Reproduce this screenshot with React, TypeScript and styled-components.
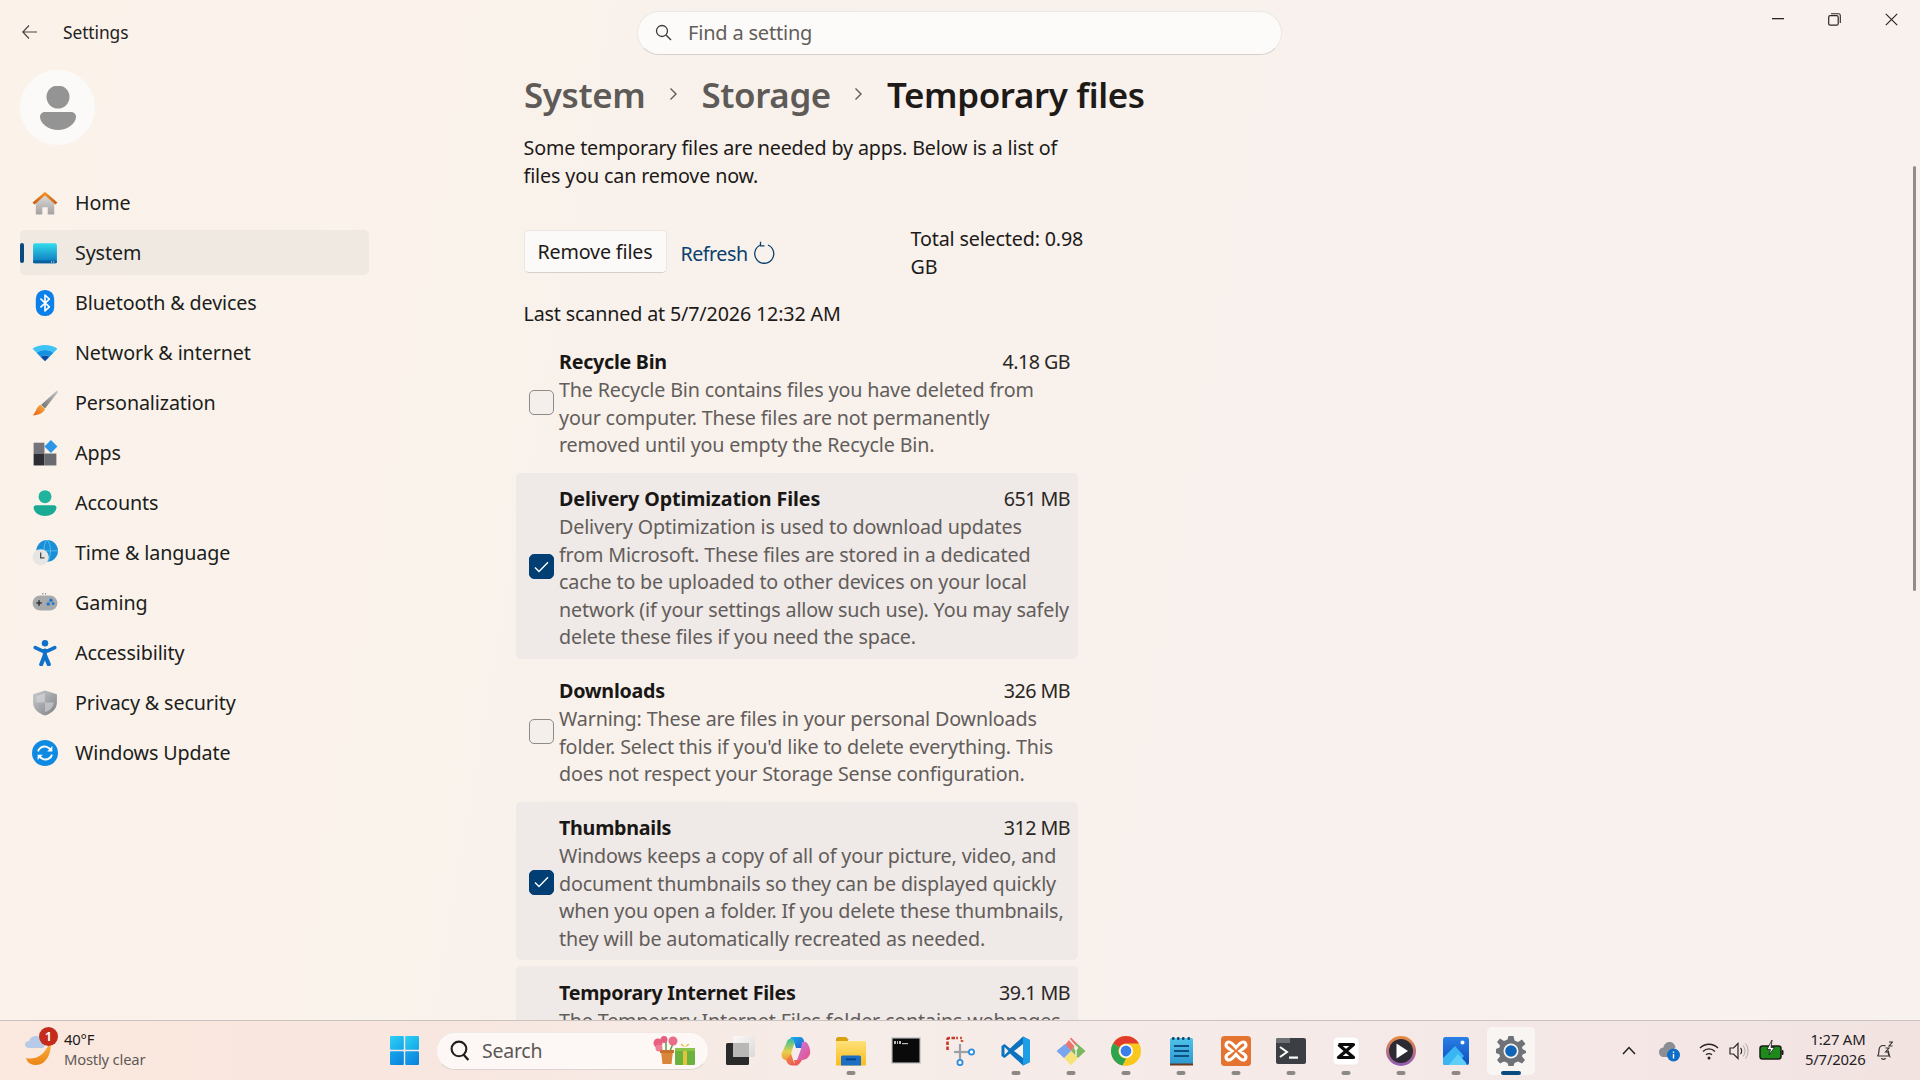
import React from "react";
import styled, { createGlobalStyle } from "styled-components";

const Global = createGlobalStyle`
  html, body { margin: 0; padding: 0; height: 100%; overflow: hidden; }
  body { font-family: "Noto Sans", "Open Sans", "Liberation Sans", sans-serif; color: #1d1a18; }
  * { box-sizing: border-box; }
`;

const Shell = styled.div`
  width: 1920px; height: 1080px; display: flex; flex-direction: column;
  background: linear-gradient(100deg, #fbf3ea 0%, #f8f1ec 45%, #f9f1ee 100%);
`;
const TitleBar = styled.header`
  flex: none; height: 65px; display: grid; grid-template-columns: 637px 645px 1fr; align-items: center;
`;
const BackCluster = styled.div`
  display: flex; align-items: center; gap: 26px; padding: 0 0 2px 22px;
  font-size: 17.4px; letter-spacing: -0.1px; color: #24211f;
`;
const SearchBox = styled.div`
  height: 44px; border-radius: 22px; background: #fdfbf9; border: 1px solid #ece7e2; border-bottom-color: #d5d0cb;
  display: flex; align-items: center; gap: 16px; padding-left: 17px;
  font-size: 20px; color: #625e5b; letter-spacing: -0.2px;
`;
const WindowControls = styled.div`
  justify-self: end; align-self: start; display: flex;
`;
const ControlButton = styled.div`
  width: 57px; height: 38px; display: flex; align-items: center; justify-content: center;
`;
const Body = styled.div`
  flex: 1; min-height: 0; display: flex; overflow: hidden; position: relative;
`;
const Sidebar = styled.aside`
  flex: none; width: 516px; padding-left: 20px; padding-top: 5px;
`;
const Avatar = styled.div`
  width: 75px; height: 75px; border-radius: 50%; background: #fbfaf9;
  display: flex; align-items: center; justify-content: center; margin-bottom: 35px;
`;
const Nav = styled.nav`
  display: flex; flex-direction: column; gap: 5px; width: 349px;
`;
const NavItem = styled.div<{ $active?: boolean }>`
  position: relative; flex: none; height: 45px; border-radius: 5px; display: flex; align-items: center; gap: 17px; padding-left: 12px;
  font-size: 19.7px; letter-spacing: -0.12px; color: #201d1b;
  background: ${(p) => (p.$active ? "#efe9e2" : "transparent")};
`;
const NavAccent = styled.span`
  position: absolute; left: 0; top: 13px; width: 4px; height: 20px; border-radius: 2px; background: #0a4a80;
`;
const NavIcon = styled.svg`
  width: 26px; height: 26px; flex: none;
`;
const Main = styled.main`
  flex: none; width: 562px; display: flex; flex-direction: column;
  & > * { flex: none; }
`;
const Breadcrumb = styled.h1`
  margin: 4px 0 0 8px; height: 50px; width: max-content; display: flex; align-items: center; gap: 23.5px;
  font-size: 34.9px; font-weight: 600; letter-spacing: -0.36px; white-space: nowrap;
`;
const Crumb = styled.span<{ $current?: boolean }>`
  color: ${(p) => (p.$current ? "#1d1a18" : "#5e5a57")};
`;
const CrumbChevron = styled.svg`
  flex: none; width: 9px; height: 14px;
`;
const Intro = styled.p`
  margin: 15px 0 0 7.5px; font-size: 19.7px; line-height: 27.5px; letter-spacing: -0.14px; white-space: nowrap; color: #1d1a18;
`;
const ActionRow = styled.div`
  margin: 36px 0 0 7.5px; display: flex; align-items: center; height: 55px;
`;
const RemoveButton = styled.div`
  flex: none; width: 143px; height: 43px; margin-bottom: 3px; border-radius: 5px; background: #fcfaf8;
  border: 1px solid #ebe6e2; border-bottom-color: #d3cfca; display: flex; align-items: center; justify-content: center;
  font-size: 19.7px; letter-spacing: -0.16px;
`;
const RefreshLink = styled.div`
  margin: 1px 0 0 14px; flex: none; display: flex; align-items: center; gap: 5px; color: #0a406f;
  font-size: 19.7px; letter-spacing: -0.5px;
`;
const TotalSelected = styled.div`
  margin-left: 136px; flex: none; font-size: 19.7px; line-height: 27.5px; letter-spacing: -0.16px; white-space: nowrap;
`;
const LastScanned = styled.div`
  margin: 20px 0 8px 7.5px; font-size: 19.7px; line-height: 27.5px; letter-spacing: -0.15px; white-space: nowrap;
`;
const FileList = styled.div`
  display: flex; flex-direction: column; gap: 6px;
`;
const FileRow = styled.div<{ $selected?: boolean }>`
  flex: none; display: flex; align-items: center; gap: 5px; padding: 12.5px 8px 8px 13px; border-radius: 5px;
  background: ${(p) => (p.$selected ? "#efe9e7" : "transparent")};
`;
const Check = styled.div<{ $checked?: boolean }>`
  flex: none; width: 25px; height: 25px; border-radius: 5px; display: flex; align-items: center; justify-content: center;
  margin-top: -2px;
  background: ${(p) => (p.$checked ? "#003e73" : "#f5efeb")};
  border: 1px solid ${(p) => (p.$checked ? "#003e73" : "#8f8b88")};
`;
const FileBody = styled.div`
  flex: 1; min-width: 0;
`;
const FileHead = styled.div`
  display: flex; justify-content: space-between; font-size: 19.7px; line-height: 27.5px; margin-bottom: 0.5px;
`;
const FileName = styled.span<{ $wide?: boolean }>`
  font-weight: 700; letter-spacing: ${(p) => (p.$wide ? "-0.1px" : "-0.27px")}; color: #191715;
`;
const FileSize = styled.span`
  color: #2a2725; letter-spacing: -0.55px;
`;
const FileDesc = styled.div`
  font-size: 19.7px; line-height: 27.5px; letter-spacing: -0.15px; color: #625d5a; white-space: nowrap;
`;
const ScrollThumb = styled.div`
  position: absolute; right: 4px; top: 101px; width: 3px; height: 425px; border-radius: 2px; background: #908d8b;
`;

const Taskbar = styled.footer`
  flex: none; height: 60px; border-top: 1px solid #cbc3bf; display: flex; align-items: center; padding-left: 25px;
  background: linear-gradient(90deg, #fbe9df 0%, #f8e6df 20%, #f6ece8 45%, #f5eae8 70%, #f2e3e1 100%);
`;
const Weather = styled.div`
  position: relative; flex: none; width: 365px; display: flex; align-items: center; gap: 11px;
`;
const WeatherGlyph = styled.svg`
  flex: none; width: 28px; height: 34px; margin-bottom: 6px;
`;
const WeatherBadge = styled.span`
  position: absolute; left: 14px; top: -2px; width: 19px; height: 19px; border-radius: 50%; background: #c42b1c; color: #fff;
  display: flex; align-items: center; justify-content: center; font-size: 13px; font-weight: 600;
`;
const WeatherText = styled.div`
  display: flex; flex-direction: column; line-height: 20px; font-size: 14.8px; letter-spacing: -0.2px; margin-bottom: 4px;
`;
const WeatherTemp = styled.span`
  color: #1d1a18;
`;
const WeatherNote = styled.span`
  color: #5f5a57;
`;
const TaskSearch = styled.div`
  flex: none; margin-left: 17px; width: 273px; height: 38px; border-radius: 19px; background: #fdf8f5;
  border: 1px solid #f0e8e3; border-bottom-color: #dcd3ce; display: flex; align-items: center; padding: 0 12px 0 13px;
  font-size: 19.5px; color: #5b5754; letter-spacing: -0.25px;
`;
const TaskSearchLabel = styled.span`
  margin-left: 12px; flex: 1;
`;
const AppStrip = styled.div`
  margin-left: 4.5px; display: flex;
`;
const AppCell = styled.div`
  width: 55px; height: 59px; display: flex; align-items: center; justify-content: center;
`;
const AppTile = styled.div<{ $active?: boolean }>`
  position: relative; width: 48px; height: 48px; border-radius: 5px; display: flex; align-items: center; justify-content: center;
  background: ${(p) => (p.$active ? "#f9f5f3" : "transparent")};
`;
const Pip = styled.span<{ $active?: boolean }>`
  position: absolute; bottom: 0; left: 50%; transform: translateX(-50%); height: 4px; border-radius: 2px;
  width: ${(p) => (p.$active ? "20px" : "9px")};
  background: ${(p) => (p.$active ? "#0a4a80" : "#8c8886")};
`;
const Tray = styled.div`
  margin-left: 83.5px; display: flex; align-items: center;
`;
const TrayItem = styled.div<{ $gap: number }>`
  margin-left: ${(p) => p.$gap}px; display: flex; align-items: center;
`;
const Clock = styled.div`
  display: flex; flex-direction: column; align-items: flex-end; width: 59px; line-height: 20px; font-size: 14.9px; letter-spacing: -0.2px; color: #24211f; white-space: nowrap; margin-bottom: 4px;
`;

const I = ({ children }: { children: React.ReactNode }) => (
  <NavIcon viewBox="0 0 24 24">{children}</NavIcon>
);

const navItems: { label: string; icon: React.ReactNode; active?: boolean }[] = [
  { label: "Home", icon: (<I>
    <defs>
      <linearGradient id="hb" x1="0" y1="0" x2="0" y2="1"><stop offset="0" stopColor="#dcdad8" /><stop offset="1" stopColor="#a3a2a1" /></linearGradient>
      <linearGradient id="hr" x1="0" y1="0" x2="0" y2="1"><stop offset="0" stopColor="#f79c30" /><stop offset="1" stopColor="#c4560f" /></linearGradient>
    </defs>
    <path d="M3.500 12 12 5l8.500 7v10.500h-6V16h-5v6.500h-6Z" fill="url(#hb)" />
    <path d="M.5 11.500 12 1.500l11.500 10-1.800 1.900L12 5 2.300 13.400Z" fill="url(#hr)" />
  </I>) },
  { label: "System", active: true, icon: (<I>
    <defs><linearGradient id="sy" x1="0" y1="0" x2="0" y2="1"><stop offset="0" stopColor="#34dcec" /><stop offset="1" stopColor="#0b74bd" /></linearGradient></defs>
    <rect x="1" y="3" width="22" height="18.500" rx="1.800" fill="url(#sy)" />
    <rect x="1" y="19" width="22" height="2.500" rx="1" fill="#0a5f9c" />
    <rect x="17.500" y="19.700" width="1" height="1" fill="#cfeefa" /><rect x="19.500" y="19.700" width="1" height="1" fill="#cfeefa" />
  </I>) },
  { label: "Bluetooth & devices", icon: (<I>
    <rect x="3.500" y="0" width="17" height="24" rx="8" fill="#0b7fea" />
    <path d="M7.800 8 16 15.600 12 19.400V4.600L16 8.400 7.800 16" fill="none" stroke="#fff" strokeWidth="1.500" strokeLinejoin="round" />
  </I>) },
  { label: "Network & internet", icon: (<I>
    <path d="M.5 8C6.500 3.500 17.500 3.500 23.500 8L19.800 11.800C15 8.500 9 8.500 4.200 11.800Z" fill="#3dc3f5" />
    <path d="M4.200 11.800C9 8.500 15 8.500 19.800 11.800L16 15.600C13.500 14 10.500 14 8 15.600Z" fill="#1492e2" />
    <path d="M8 15.600C10.500 14 13.500 14 16 15.600L12 19.500Z" fill="#0a4ca3" />
  </I>) },
  { label: "Personalization", icon: (<I>
    <defs>
      <linearGradient id="bh" x1="1" y1="0" x2="0" y2="1"><stop offset="0" stopColor="#c9c9c9" /><stop offset="1" stopColor="#6f6f6f" /></linearGradient>
      <linearGradient id="bt" x1="1" y1="0" x2="0" y2="1"><stop offset="0" stopColor="#f7b34a" /><stop offset="1" stopColor="#e4610d" /></linearGradient>
    </defs>
    <path d="M23 .5 24 2 12 17 8.500 13.500Z" fill="url(#bh)" />
    <path d="M8 13.500 12 17.500C11 21 6 23.500.5 23.300 3.500 21.500 4 15 8 13.500Z" fill="url(#bt)" />
  </I>) },
  { label: "Apps", icon: (<I>
    <rect x="1.500" y="2.500" width="10" height="10" fill="#74747a" />
    <rect x="1.500" y="12.500" width="10" height="11" fill="#2d2d33" />
    <rect x="11.500" y="12.500" width="11" height="11" fill="#6a6b70" />
    <path d="M17.500 0 23.500 6 17.500 12 11.500 6Z" fill="#2d96e8" />
  </I>) },
  { label: "Accounts", icon: (<I>
    <circle cx="12" cy="6.200" r="6" fill="#1fb49d" />
    <path d="M3.500 14H20.500C21.500 14 22.500 15 22.500 16 22.500 21 17 24 12 24S1.500 21 1.500 16C1.500 15 2.500 14 3.500 14Z" fill="#1aa993" />
  </I>) },
  { label: "Time & language", icon: (<I>
    <circle cx="14" cy="10" r="10" fill="#1a8fd8" />
    <path d="M4 10H24M14 0C10 3 10 17 14 20M14 0C18 3 18 17 14 20" fill="none" stroke="#5cc3ee" strokeWidth=".8" />
    <circle cx="8" cy="16" r="7.500" fill="#e6e5e4" />
    <path d="M8 11.500V16.500H11.500" fill="none" stroke="#4c4c4c" strokeWidth="1.200" />
  </I>) },
  { label: "Gaming", icon: (<I>
    <rect x=".5" y="5" width="23" height="14" rx="7" fill="#a8a9ab" />
    <path d="M4 12H9M6.500 9.500V14.500" stroke="#34373b" strokeWidth="1.500" />
    <circle cx="17.500" cy="9.500" r="1.600" fill="#1a76cf" /><circle cx="15" cy="13" r="1.600" fill="#1a76cf" />
    <circle cx="19.500" cy="12.500" r="1.300" fill="#1a76cf" />
    <rect x="9.500" y="3" width="1" height="1" fill="#666" /><rect x="12" y="3" width="1" height="1" fill="#666" />
  </I>) },
  { label: "Accessibility", icon: (<I>
    <circle cx="12" cy="3" r="3" fill="#0e72cc" />
    <path d="M3 7 9.500 10H14.500L21 7" fill="none" stroke="#0e72cc" strokeWidth="3.400" strokeLinecap="round" strokeLinejoin="round" />
    <path d="M12 9.800 11.800 14 8.500 22.500M12 14 15.500 22.500" fill="none" stroke="#0e72cc" strokeWidth="3.800" strokeLinecap="round" />
  </I>) },
  { label: "Privacy & security", icon: (<I>
    <defs><linearGradient id="sh" x1="0" y1="0" x2="1" y2="1"><stop offset="0" stopColor="#c9cbcd" /><stop offset="1" stopColor="#7e8184" /></linearGradient></defs>
    <path d="M12 .5 23 4V11.500C23 17.500 18 21.800 12 23.500 6 21.800 1 17.500 1 11.500V4Z" fill="url(#sh)" />
    <path d="M12 3 4 5.500V11.500H12ZM12 11.500V20.500C16 19 20 16 20 11.500Z" fill="#dcdde0" opacity=".55" />
  </I>) },
  { label: "Windows Update", icon: (<I>
    <circle cx="12" cy="12" r="12" fill="#0f8ae2" />
    <path d="M5.500 10.500C6.500 7 10 5.500 13 6.200 15 6.700 16.500 7.800 17.500 9.500M18.500 13.500C17.500 17 14 18.500 11 17.800 9 17.300 7.500 16.200 6.500 14.500" fill="none" stroke="#fff" strokeWidth="1.700" />
    <path d="M18.800 5.500V10.500H14ZM5.200 18.500V13.500H10Z" fill="#fff" />
  </I>) },
];

const rows = [
  { name: "Recycle Bin", size: "4.18 GB", lines: ["The Recycle Bin contains files you have deleted from", "your computer. These files are not permanently", "removed until you empty the Recycle Bin."] },
  { name: "Delivery Optimization Files", wide: true, size: "651 MB", selected: true, lines: ["Delivery Optimization is used to download updates", "from Microsoft. These files are stored in a dedicated", "cache to be uploaded to other devices on your local", "network (if your settings allow such use). You may safely", "delete these files if you need the space."] },
  { name: "Downloads", size: "326 MB", lines: ["Warning: These are files in your personal Downloads", "folder. Select this if you'd like to delete everything. This", "does not respect your Storage Sense configuration."] },
  { name: "Thumbnails", size: "312 MB", selected: true, lines: ["Windows keeps a copy of all of your picture, video, and", "document thumbnails so they can be displayed quickly", "when you open a folder. If you delete these thumbnails,", "they will be automatically recreated as needed."] },
  { name: "Temporary Internet Files", size: "39.1 MB", selected: true, lines: ["The Temporary Internet Files folder contains webpages", "stored on your hard disk for quick viewing. Your", "personalized settings for webpages will be left intact."] },
];

const Chevron = () => (
  <CrumbChevron viewBox="0 0 9 14"><path d="M1.500 1.500 7 7 1.500 12.500" fill="none" stroke="#5e5a57" strokeWidth="1.400" /></CrumbChevron>
);

const A = ({ w = 30, h = 30, vb = "0 0 30 30", children }: { w?: number; h?: number; vb?: string; children: React.ReactNode }) => (
  <svg width={w} height={h} viewBox={vb}>{children}</svg>
);

const apps: { key: string; icon: React.ReactNode; pip?: boolean; active?: boolean }[] = [
  { key: "taskview", icon: (<A>
    <defs><linearGradient id="tv" x1="0" y1="0" x2="1" y2="1"><stop offset="0" stopColor="#fbfbfb" /><stop offset="1" stopColor="#d9d7d6" /></linearGradient></defs>
    <rect x="0" y="7" width="23" height="22" rx="1.500" fill="#2b2a2a" />
    <rect x="7" y="0" width="22" height="21" rx="1.500" fill="url(#tv)" opacity=".9" />
    <rect x="7" y="7" width="16" height="14" fill="#b9b8b7" />
  </A>) },
  { key: "copilot", icon: (<A>
    <defs>
      <linearGradient id="c1" x1="0" y1="0" x2="1" y2="1"><stop offset="0" stopColor="#19b5e8" /><stop offset="1" stopColor="#2454d6" /></linearGradient>
      <linearGradient id="c2" x1="0" y1="0" x2="0" y2="1"><stop offset="0" stopColor="#2fbf9a" /><stop offset=".6" stopColor="#e6d14b" /><stop offset="1" stopColor="#f29b3a" /></linearGradient>
      <linearGradient id="c3" x1="0" y1="0" x2="1" y2="1"><stop offset="0" stopColor="#c77ce0" /><stop offset="1" stopColor="#e84f86" /></linearGradient>
      <linearGradient id="c4" x1="0" y1="0" x2="1" y2="1"><stop offset="0" stopColor="#f2943c" /><stop offset="1" stopColor="#e8455f" /></linearGradient>
    </defs>
    <path d="M11 1H19C21.500 1 22.500 3 23 5L25 12 15 12 13 6C12.500 4.500 11.500 3 9 3 9.500 2 10 1 11 1Z" fill="url(#c1)" />
    <path d="M9 3C7 3 6 5 5.500 7L.8 17C0 20 1.500 24 5 24H12L10 18 13 8C13.500 5 11.500 3 9 3Z" fill="url(#c2)" />
    <path d="M21 6 25 6C28 8 30 15 29 18 28 21 25 24 21 24H16L20 13Z" fill="url(#c3)" />
    <path d="M10 18 12 24C13 27 15 29.500 18 29.500H11C8 29.500 6 27 5 24Z M13 24H21C19 27 17 29.500 15 29.500 14 28 13.500 26 13 24Z" fill="url(#c4)" />
  </A>) },
  { key: "explorer", pip: true, icon: (<A>
    <defs><linearGradient id="ex" x1="0" y1="0" x2="0" y2="1"><stop offset="0" stopColor="#fde17a" /><stop offset="1" stopColor="#fbbb1c" /></linearGradient></defs>
    <path d="M0 3C0 2 1 1 2 1H10L13 4H12V6H0Z" fill="#d8a20f" />
    <rect x="0" y="5" width="30" height="24.500" rx="1.200" fill="url(#ex)" />
    <path d="M5 21C5 20 6 19.500 7 19.500H23C24 19.500 25 20 25 21V29.500H5Z" fill="#1a6fc4" />
    <rect x="10" y="22.500" width="10" height="1.800" fill="#0b3f80" />
  </A>) },
  { key: "cmd", icon: (<A>
    <rect x="0" y="1" width="30" height="27" rx="1" fill="#cfcfcf" />
    <rect x="1.500" y="2.500" width="27" height="24" fill="#0a0a0a" />
    <rect x="3" y="5" width="2" height="3" fill="#bbb" /><rect x="6" y="5" width="1" height="3" fill="#bbb" /><rect x="8" y="5" width="2" height="3" fill="#bbb" /><rect x="11" y="7" width="6" height="1.200" fill="#bbb" />
  </A>) },
  { key: "snip", icon: (<A>
    <path d="M9 2H3C2 2 1.500 2.500 1.500 3.500V15" fill="none" stroke="#c73a28" strokeWidth="2.600" strokeDasharray="3.500 1.500" />
    <path d="M10 2H16V6" fill="none" stroke="#d05540" strokeWidth="2.600" strokeDasharray="2 2" />
    <path d="M14 8V23" stroke="#9aa0a6" strokeWidth="2.200" />
    <path d="M8 16H25" stroke="#9aa0a6" strokeWidth="2.200" />
    <circle cx="25.500" cy="16" r="2.600" fill="#fff" stroke="#2a8fdc" strokeWidth="1.800" />
    <circle cx="14" cy="26.500" r="2.600" fill="#fff" stroke="#2a8fdc" strokeWidth="1.800" />
  </A>) },
  { key: "vscode", pip: true, icon: (<A>
    <path d="M22 .5 29 4V26L22 29.500 9 17.500 3.500 22 .5 20V10L3.500 8 9 12.500Z" fill="#0a72bf" />
    <path d="M22 .5 29 4V26L22 29.500Z" fill="#1f9ee8" />
    <path d="M22 8V22L13 15Z" fill="#f8f1ee" />
    <path d="M3.500 11V19L7.500 15Z" fill="#f8f1ee" />
  </A>) },
  { key: "git", pip: true, icon: (<A>
    <path d="M15 15 9 9 15 1.500 21 7.500Z" fill="#e9756e" />
    <path d="M15 15 21 7.500 29.500 15 22 22Z" fill="#7ab75d" />
    <path d="M15 15 22 22 15 29.500 8 22Z" fill="#f8e27c" />
    <path d="M15 15 8 22 .5 15 9 8Z" fill="#79a5ee" />
    <path d="M13 3 20 11M20 12 V20" stroke="#f5ebe8" strokeWidth="1.500" />
    <circle cx="20" cy="12" r="2" fill="#f5ebe8" />
  </A>) },
  { key: "chrome", pip: true, icon: (<A>
    <circle cx="15" cy="15" r="15" fill="#f9c81f" />
    <path d="M15 0A15 15 0 0 1 28 7.500H15A7.500 7.500 0 0 0 8.500 11.200L2 7.500A15 15 0 0 1 15 0Z" fill="#e33b2e" />
    <path d="M2 7.500 8.500 11.200A7.500 7.500 0 0 0 15 22.500L11.500 29.600A15 15 0 0 1 2 7.500Z" fill="#2fa44f" />
    <circle cx="15" cy="15" r="7" fill="#fff" /><circle cx="15" cy="15" r="5.400" fill="#3c7ee8" />
  </A>) },
  { key: "notepad", pip: true, icon: (<A w={23} vb="0 0 23 30">
    <defs><linearGradient id="np" x1="0" y1="0" x2="0" y2="1"><stop offset="0" stopColor="#4fc3ea" /><stop offset="1" stopColor="#2b96cf" /></linearGradient></defs>
    <rect x="0" y="2" width="23" height="27" rx="1.500" fill="url(#np)" />
    <rect x="0" y="27.500" width="23" height="2" fill="#6a3a1c" />
    <rect x="2" y="1" width="2.500" height="3" rx="1" fill="#13456c" /><rect x="7" y="1" width="2.500" height="3" rx="1" fill="#13456c" /><rect x="12" y="1" width="2.500" height="3" rx="1" fill="#13456c" /><rect x="17.500" y="1" width="2.500" height="3" rx="1" fill="#13456c" />
    <path d="M4 10H19M4 15H19M4 20H19" stroke="#0c4f80" strokeWidth="2" />
  </A>) },
  { key: "xampp", pip: true, icon: (<A>
    <rect x="0" y="0" width="30" height="30" rx="3.500" fill="#e4742f" />
    <path d="M8 6C5 6 4 10 6.500 11.500L11 15 6.500 18.500C4 20 5 24 8 24 10 24 12 22 15 18.500 18 22 20 24 22 24 25 24 26 20 23.500 18.500L19 15 23.500 11.500C26 10 25 6 22 6 20 6 18 8 15 11.500 12 8 10 6 8 6Z" fill="none" stroke="#fff" strokeWidth="3.200" />
  </A>) },
  { key: "terminal", pip: true, icon: (<A>
    <rect x="0" y="2" width="30" height="26" rx="2" fill="#3b3e42" />
    <path d="M0 4C0 3 1 2 2 2H14V7H0Z" fill="#6d7074" />
    <path d="M4 11 11 16 4 21" fill="none" stroke="#fff" strokeWidth="2" />
    <rect x="13" y="20.500" width="9" height="2.200" fill="#fff" />
  </A>) },
  { key: "capcut", pip: true, icon: (<A>
    <rect x="2" y="1" width="26" height="28" rx="5" fill="#fff" stroke="#ece6e3" strokeWidth=".8" />
    <path d="M7.500 8.500H22.500L7.500 21.500H22.500L7.500 8.500" fill="none" stroke="#0b0b0b" strokeWidth="3.200" strokeLinejoin="round" />
  </A>) },
  { key: "media", pip: true, icon: (<A>
    <defs><linearGradient id="md" x1="0" y1="0" x2="0" y2="1"><stop offset="0" stopColor="#e88b3d" /><stop offset="1" stopColor="#8d5ab8" /></linearGradient></defs>
    <circle cx="15" cy="15" r="15" fill="url(#md)" /><circle cx="15" cy="15" r="12" fill="#2e2a33" />
    <path d="M10.500 7.500 22 15 10.500 22.500Z" fill="#fff" />
  </A>) },
  { key: "photos", pip: true, icon: (<A w={26} vb="0 0 26 30">
    <defs><linearGradient id="ph" x1="0" y1="0" x2="0" y2="1"><stop offset="0" stopColor="#2a7fe6" /><stop offset="1" stopColor="#0b4fbf" /></linearGradient></defs>
    <rect x="0" y="1" width="26" height="28" rx="2.500" fill="url(#ph)" />
    <circle cx="19.500" cy="6.500" r="2" fill="#fff" />
    <path d="M0 22 12 10 21 20 13 29H2.500C1 29 0 28 0 26.500Z" fill="#39b6f2" />
    <path d="M6 29 15 18 22.500 26 24 29Z" fill="#5fcff7" />
  </A>) },
  { key: "settings", pip: true, active: true, icon: (<A>
    <path d="M12.500 0H17.500L18.500 4.500 22 6 26 3.500 29.500 8 26 11 26.500 13 30 15 30 17 26.500 18.500 26 20.500 29 24 26 27.500 22 25.500 18.500 27 17.500 30H12.500L11.500 27 8 25.500 4 27.500 1 24 4 20.500 3.500 18.500 0 17V13L3.500 11.500 4 9.500 1 6 4 2.500 8 5 11.500 3.500Z" fill="#6f7378" />
    <circle cx="15" cy="15" r="7.500" fill="#f7f2ef" /><circle cx="15" cy="15" r="5.800" fill="#0f65b8" />
  </A>) },
];

export default function App() {
  return (
    <>
      <Global />
      <Shell>
        <TitleBar>
          <BackCluster>
            <svg width="15" height="14" viewBox="0 0 15 14"><path d="M7 .5.8 7 7 13.500M.8 7H15" fill="none" stroke="#4a4643" strokeWidth="1.200" /></svg>
            <span>Settings</span>
          </BackCluster>
          <SearchBox>
            <svg width="17" height="17" viewBox="0 0 17 17"><circle cx="7" cy="7" r="5.500" fill="none" stroke="#3d3a38" strokeWidth="1.300" /><path d="M11 11 16 16" stroke="#3d3a38" strokeWidth="1.400" /></svg>
            <span>Find a setting</span>
          </SearchBox>
          <WindowControls>
            <ControlButton><svg width="12" height="2"><rect width="12" height="1.300" fill="#2a2725" /></svg></ControlButton>
            <ControlButton><svg width="13" height="13" viewBox="0 0 13 13"><rect x=".7" y="2.700" width="9.500" height="9.500" rx="1.500" fill="none" stroke="#2a2725" strokeWidth="1.200" /><path d="M3 .7H10.500C11.500.7 12.300 1.500 12.300 2.500V10" fill="none" stroke="#2a2725" strokeWidth="1.100" /></svg></ControlButton>
            <ControlButton><svg width="13" height="13" viewBox="0 0 13 13"><path d="M.8.8 12.200 12.200M12.200.8.8 12.200" stroke="#2a2725" strokeWidth="1.200" /></svg></ControlButton>
          </WindowControls>
        </TitleBar>
        <Body>
          <Sidebar>
            <Avatar>
              <svg width="36" height="44" viewBox="0 0 36 44"><circle cx="18" cy="11" r="11.500" fill="#949494" /><path d="M5 26H31C33.500 26 36 28 36 30.500 36 38 27 44 18 44S0 38 0 30.500C0 28 2.500 26 5 26Z" fill="#949494" /></svg>
            </Avatar>
            <Nav>
              {navItems.map((n) => (
                <NavItem key={n.label} $active={n.active}>
                  {n.active && <NavAccent />}
                  {n.icon}
                  <span>{n.label}</span>
                </NavItem>
              ))}
            </Nav>
          </Sidebar>
          <Main>
            <Breadcrumb>
              <Crumb>System</Crumb>
              <Chevron />
              <Crumb>Storage</Crumb>
              <Chevron />
              <Crumb $current>Temporary files</Crumb>
            </Breadcrumb>
            <Intro>Some temporary files are needed by apps. Below is a list of<br />files you can remove now.</Intro>
            <ActionRow>
              <RemoveButton>Remove files</RemoveButton>
              <RefreshLink>
                <span>Refresh</span>
                <svg width="22" height="24" viewBox="0 0 22 24"><path d="M7.500 4A9.500 9.500 0 1 0 15 4" fill="none" stroke="#0a406f" strokeWidth="1.300" /><path d="M7.500 .8V4.800H11.500" fill="none" stroke="#0a406f" strokeWidth="1.300" /></svg>
              </RefreshLink>
              <TotalSelected>Total selected: 0.98<br />GB</TotalSelected>
            </ActionRow>
            <LastScanned>Last scanned at 5/7/2026 12:32 AM</LastScanned>
            <FileList>
              {rows.map((r) => (
                <FileRow key={r.name} $selected={r.selected}>
                  <Check $checked={r.selected}>
                    {r.selected && <svg width="15" height="12" viewBox="0 0 15 12"><path d="M1 6.500 5 10.500 14 1.200" fill="none" stroke="#fff" strokeWidth="1.400" /></svg>}
                  </Check>
                  <FileBody>
                    <FileHead><FileName $wide={r.wide}>{r.name}</FileName><FileSize>{r.size}</FileSize></FileHead>
                    {r.lines.map((l) => (<FileDesc key={l}>{l}</FileDesc>))}
                  </FileBody>
                </FileRow>
              ))}
            </FileList>
          </Main>
          <ScrollThumb />
        </Body>
        <Taskbar>
          <Weather>
            <WeatherGlyph viewBox="0 0 28 34">
              <defs><linearGradient id="mo" x1="0" y1="0" x2="0" y2="1"><stop offset="0" stopColor="#f9b03a" /><stop offset="1" stopColor="#ec8516" /></linearGradient></defs>
              <path d="M25 11C27.500 20 22 34 11 34 6 34 2 31.500 1 27 9 29 19 26 25 11Z" fill="url(#mo)" />
              <path d="M4 17C1.500 17 0 15.500 0 13.500 0 11.500 1.800 10 4 10 5 6.500 8 5 11 5 14 5 17 7.500 17 10.500 19 10.500 20 12 20 13.500S19 17 17 17Z" fill="#b7cbe8" />
            </WeatherGlyph>
            <WeatherBadge>1</WeatherBadge>
            <WeatherText>
              <WeatherTemp>40°F</WeatherTemp>
              <WeatherNote>Mostly clear</WeatherNote>
            </WeatherText>
          </Weather>
          <svg width="29" height="29" viewBox="0 0 29 29">
            <defs>
              <linearGradient id="w1" x1="0" y1="0" x2="1" y2="1"><stop offset="0" stopColor="#2fd0f4" /><stop offset="1" stopColor="#13a6ea" /></linearGradient>
              <linearGradient id="w2" x1="0" y1="0" x2="1" y2="1"><stop offset="0" stopColor="#17a8ec" /><stop offset="1" stopColor="#0a7fdc" /></linearGradient>
            </defs>
            <rect width="13.800" height="13.800" rx="1" fill="url(#w1)" /><rect x="15.200" width="13.800" height="13.800" rx="1" fill="url(#w1)" />
            <rect y="15.200" width="13.800" height="13.800" rx="1" fill="url(#w2)" /><rect x="15.200" y="15.200" width="13.800" height="13.800" rx="1" fill="url(#w2)" />
          </svg>
          <TaskSearch>
            <svg width="20" height="21" viewBox="0 0 19 20"><circle cx="8.500" cy="8.500" r="7" fill="none" stroke="#1f1d1b" strokeWidth="2" /><path d="M13 14 17.500 19" stroke="#1f1d1b" strokeWidth="2.200" /></svg>
            <TaskSearchLabel>Search</TaskSearchLabel>
            <svg width="43" height="30" viewBox="0 0 43 30">
              <path d="M9 15 5 3M13 15V6M17 15 21 5" stroke="#5f9a4a" strokeWidth="1.500" />
              <circle cx="5" cy="7" r="4.500" fill="#ea5f80" /><circle cx="11" cy="3.500" r="3.500" fill="#e2607c" /><circle cx="20" cy="5" r="4.500" fill="#e96d88" /><circle cx="6" cy="12" r="3.500" fill="#ec7f95" />
              <path d="M8 15H20L18.500 28H9.500Z" fill="#d9853a" /><rect x="7" y="14" width="14" height="3" fill="#c9722b" />
              <rect x="22" y="12" width="20" height="17" rx="1" fill="#6cb23e" />
              <rect x="30" y="12" width="4" height="17" fill="#e4c23a" /><rect x="22" y="12" width="20" height="3" fill="#8cc34a" />
              <path d="M32 11C28 5 25 9 32 11 39 9 36 5 32 11Z" fill="#e4c23a" />
            </svg>
          </TaskSearch>
          <AppStrip>
            {apps.map((a) => (
              <AppCell key={a.key}>
                <AppTile $active={a.active}>
                  {a.icon}
                  {a.pip && <Pip $active={a.active} />}
                </AppTile>
              </AppCell>
            ))}
          </AppStrip>
          <Tray>
            <TrayItem $gap={0}>
              <svg width="14" height="9" viewBox="0 0 14 9"><path d="M1 8 7 1.500 13 8" fill="none" stroke="#22201e" strokeWidth="1.500" /></svg>
            </TrayItem>
            <TrayItem $gap={23}>
              <svg width="21" height="22" viewBox="0 0 21 22">
                <path d="M5 17C2 17 0 15 0 12 0 9 2 7.500 4.500 7.500 5 4 7.500 2 10.500 2 13.500 2 16 4 16.500 7.500" fill="#8b8f93" /><path d="M5 17V8H15V17Z" fill="#8b8f93" />
                <circle cx="14.500" cy="15" r="6.500" fill="#0f6cc7" /><rect x="13.800" y="14" width="1.400" height="4.500" fill="#fff" /><rect x="13.800" y="11.500" width="1.400" height="1.400" fill="#fff" />
              </svg>
            </TrayItem>
            <TrayItem $gap={19}>
              <svg width="20" height="18" viewBox="0 0 20 18"><path d="M1 6C6 1 14 1 19 6M4 9.500C7.500 6 12.500 6 16 9.500M7 12.800C8.800 11.300 11.200 11.300 13 12.800" fill="none" stroke="#26231f" strokeWidth="1.300" /><circle cx="10" cy="16" r="1.500" fill="#26231f" /></svg>
            </TrayItem>
            <TrayItem $gap={10}>
              <svg width="20" height="18" viewBox="0 0 20 18"><path d="M1 6H4.500L9 1.500V16.500L4.500 12H1Z" fill="none" stroke="#2a2724" strokeWidth="1.200" /><path d="M11.500 6C13 7.500 13 10.500 11.500 12" fill="none" stroke="#2a2724" strokeWidth="1.200" /><path d="M14 3.500C16.700 6.500 16.700 11.500 14 14.500M16.500 1.500C20 5.500 20 12.500 16.500 16.500" fill="none" stroke="#b5b0ae" strokeWidth="1.100" /></svg>
            </TrayItem>
            <TrayItem $gap={10}>
              <svg width="25" height="22" viewBox="0 0 25 22"><rect x="1" y="6" width="21" height="13" rx="2.500" fill="#1e8a1c" stroke="#1d1b19" strokeWidth="1.500" /><rect x="22.500" y="10" width="2" height="5" rx="1" fill="#1d1b19" /><path d="M13 0 8 9.500H11.500L10 15 15.500 7.500H12Z" fill="#fafafa" stroke="#1d1b19" strokeWidth=".8" /></svg>
            </TrayItem>
            <TrayItem $gap={22.5}>
              <Clock><span>1:27 AM</span><span>5/7/2026</span></Clock>
            </TrayItem>
            <TrayItem $gap={10.5}>
              <svg width="17" height="20" viewBox="0 0 17 20"><path d="M1.500 15C3 13.500 3 12 3 9.500 3 6.500 4.500 4.500 7.500 4.500 8.500 4.500 9 4.800 9.500 5M12 9.500C12 12 12 13.500 13.500 15Z M1.500 15H13.500" fill="none" stroke="#33302d" strokeWidth="1.200" /><path d="M5.500 17C6 18.800 9 18.800 9.500 17" fill="none" stroke="#33302d" strokeWidth="1.200" /><path d="M9.500 7H13L9.500 11H13M13 1H16.500L13 5H16.500" fill="none" stroke="#33302d" strokeWidth="1.100" /></svg>
            </TrayItem>
          </Tray>
        </Taskbar>
      </Shell>
    </>
  );
}
